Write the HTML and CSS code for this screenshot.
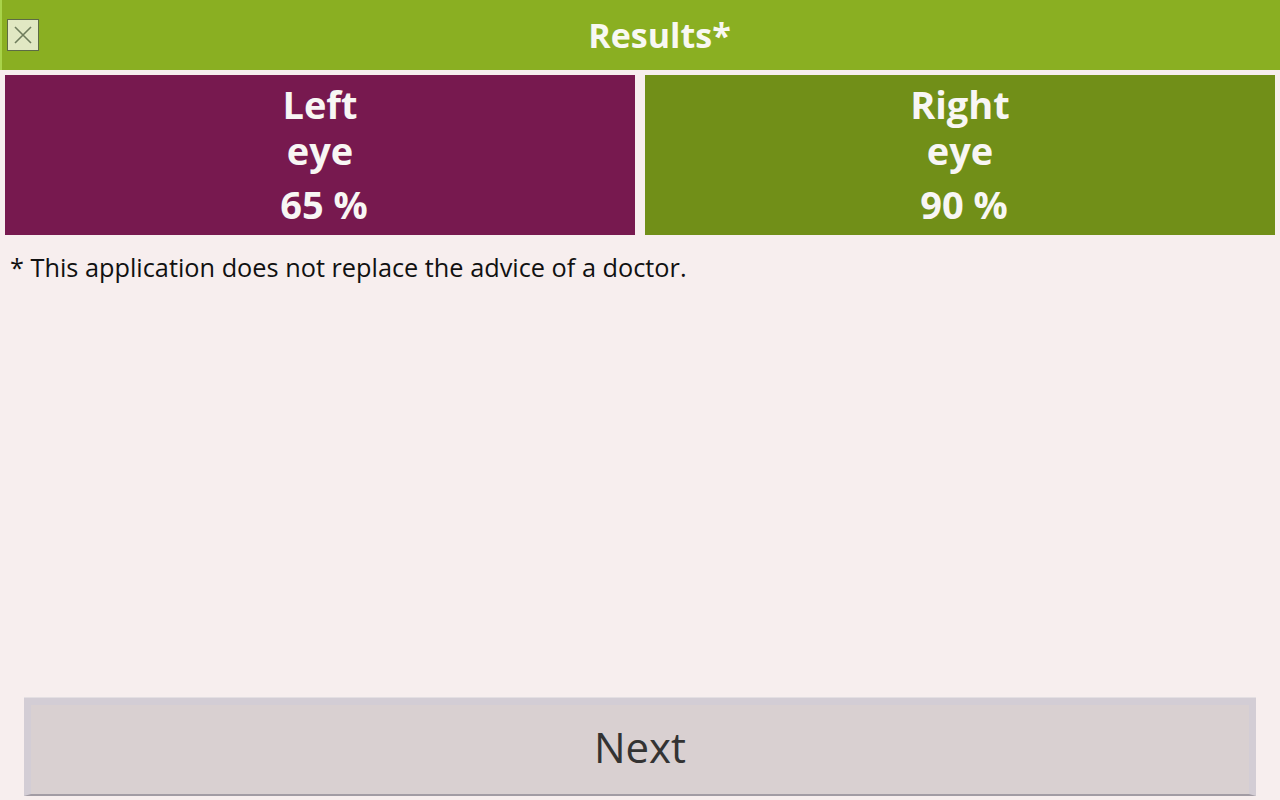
FILE: index.html
```html
<!DOCTYPE html>
<html lang="en">
<head>
  <meta charset="UTF-8" />
  <meta name="viewport" content="width=device-width, initial-scale=1.0" />
  <title>Results</title>
  <link rel="stylesheet" href="styles.css">
</head>
<body>
  <header>
    <button class="close" title="Close">
      <svg width="20" height="20" viewBox="0 0 20 20">
        <path d="M2 2 L18 18 M18 2 L2 18" stroke="#6e7c5c" stroke-width="1.6" fill="none" />
      </svg>
    </button>
    <h1>Results*</h1>
  </header>
  <div class="results">
    <div class="eye left">
      <div class="label">Left</div>
      <div class="label">eye</div>
      <div class="score">65 %</div>
    </div>
    <div class="eye right">
      <div class="label">Right</div>
      <div class="label">eye</div>
      <div class="score">90 %</div>
    </div>
  </div>
  <p class="note">* This application does not replace the advice of a doctor.</p>
  <div class="actions">
    <button class="next">Next</button>
  </div>
</body>
</html>
```
FILE: styles.css
```css
body {
  font-family: "Open Sans", "DejaVu Sans", sans-serif;
  background: #f7eeee;
  margin: 0;
  padding: 0;
  height: 800px;
  display: flex;
  flex-direction: column;
  overflow: hidden;
}
header {
  background: #8aaf22;
  border-left: 2px solid #a9d34a;
  height: 70px;
  display: flex;
  align-items: center;
  padding-left: 5px;
}
header h1 {
  flex: 1;
  margin: 0;
  text-align: center;
  color: #f8f8f2;
  font-size: 34px;
  font-weight: bold;
}
.close {
  width: 32px;
  height: 32px;
  padding: 0;
  background: #e1e8c3;
  border: 1px solid #5d6b45;
  display: flex;
  align-items: center;
  justify-content: center;
}
.results {
  display: flex;
  gap: 10px;
  padding: 5px 5px 0;
}
.eye {
  flex: 1;
  height: 160px;
  padding-top: 6px;
  box-sizing: border-box;
  color: #f8f6f4;
  font-weight: bold;
  text-align: center;
  font-size: 38px;
}
.eye.left {
  background: #77194f;
}
.eye.right {
  background: #718f18;
}
.label {
  line-height: 46px;
}
.score {
  line-height: 46px;
  margin-top: 8px;
  padding-left: 8px;
}
.note {
  margin: 15px 0 0 10px;
  font-size: 25.3px;
  color: #111;
}
.actions {
  margin-top: auto;
  padding: 0 24px 4px;
}
.next {
  width: 100%;
  height: 98px;
  background: #d9d0d1;
  border: 7px solid #d3cdd5;
  border-bottom: 2px solid #a29ca4;
  box-shadow: 0 -1px 0 #e4dfe2;
  font-family: "Open Sans", "DejaVu Sans", sans-serif;
  font-size: 42px;
  color: #333;
  padding: 0 0 6px;
}
```
